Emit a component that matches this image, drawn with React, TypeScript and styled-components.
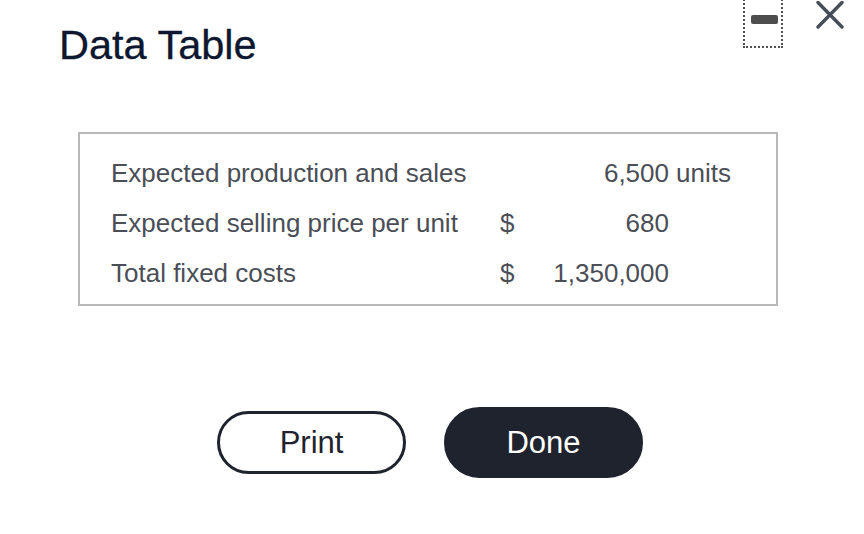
import * as React from "react";
import styled, { createGlobalStyle } from "styled-components";

const GlobalStyle = createGlobalStyle`
    html, body {
        margin: 0;
        padding: 0;
        background: #ffffff;
    }
    body {
        font-family: "Liberation Sans", Arial, sans-serif;
    }
`;

const Dialog = styled.div`
    width: 864px;
    height: 534px;
    overflow: hidden;
    background: #ffffff;
    display: flex;
    flex-direction: column;
`;

const Header = styled.div`
    display: flex;
    justify-content: space-between;
    align-items: flex-start;
    padding: 0 20px 0 59px;
`;

const Title = styled.h1`
    margin: 25px 0 0 0;
    font-size: 41.5px;
    line-height: 40px;
    font-weight: 400;
    color: #0d1730;
    -webkit-text-stroke: 0.3px #0d1730;
`;

const Controls = styled.div`
    display: flex;
    align-items: flex-start;
    gap: 33px;
`;

const MinimizeButton = styled.div`
    box-sizing: border-box;
    width: 40px;
    height: 52px;
    margin-top: -4px;
    padding: 17px 0 0 6px;
    border: 2px dotted #505050;
    cursor: pointer;
`;

const MinimizeBar = styled.div`
    width: 27px;
    height: 9px;
    border-radius: 2px;
    background: #4d4d4d;
`;

const CloseButton = styled.div`
    margin-top: 1px;
    width: 28px;
    height: 28px;
    cursor: pointer;
    display: flex;
`;

const TableBox = styled.div`
    box-sizing: border-box;
    margin: 67px 0 0 78px;
    width: 700px;
    height: 174px;
    border: 2px solid #b8b8b8;
    padding: 14px 0 0 31px;
`;

const Grid = styled.div`
    display: grid;
    grid-template-columns: 389px 24px 145px auto;
    grid-auto-rows: 50px;
    align-items: center;
    font-size: 26px;
    color: #4a4e57;
`;

const Cell = styled.div<{ $align?: "left" | "right" }>`
    text-align: ${(p) => p.$align ?? "left"};
    white-space: nowrap;
    line-height: 50px;
`;

const UnitCell = styled(Cell)`
    padding-left: 7px;
`;

const ButtonRow = styled.div`
    display: flex;
    align-items: center;
    gap: 38px;
    margin: 101px 0 0 217px;
`;

const PillButton = styled.button<{ $primary?: boolean }>`
    box-sizing: border-box;
    font-family: "Liberation Sans", Arial, sans-serif;
    font-size: 31px;
    border-radius: 40px;
    cursor: pointer;
    width: ${(p) => (p.$primary ? "199px" : "189px")};
    height: ${(p) => (p.$primary ? "71px" : "63px")};
    border: 3px solid #1f232e;
    background: ${(p) => (p.$primary ? "#1f232e" : "#ffffff")};
    color: ${(p) => (p.$primary ? "#ffffff" : "#1f232e")};
    display: flex;
    align-items: center;
    justify-content: center;
    padding: 0;
`;

const rows = [
    { label: "Expected production and sales", sign: "", value: "6,500", unit: "units" },
    { label: "Expected selling price per unit", sign: "$", value: "680", unit: "" },
    { label: "Total fixed costs", sign: "$", value: "1,350,000", unit: "" },
];

export default function App() {
    return (
        <>
            <GlobalStyle />
            <Dialog>
                <Header>
                    <Title>Data Table</Title>
                    <Controls>
                        <MinimizeButton role="button" aria-label="Minimize">
                            <MinimizeBar />
                        </MinimizeButton>
                        <CloseButton role="button" aria-label="Close">
                            <svg width="28" height="28" viewBox="0 0 28 28">
                                <path d="M2 1.5 L26 26 M26 1.5 L2 26" stroke="#454d59" strokeWidth="3.4" strokeLinecap="round" fill="none" />
                            </svg>
                        </CloseButton>
                    </Controls>
                </Header>
                <TableBox>
                    <Grid>
                        {rows.map((r) => (
                            <React.Fragment key={r.label}>
                                <Cell>{r.label}</Cell>
                                <Cell>{r.sign}</Cell>
                                <Cell $align="right">{r.value}</Cell>
                                <UnitCell>{r.unit}</UnitCell>
                            </React.Fragment>
                        ))}
                    </Grid>
                </TableBox>
                <ButtonRow>
                    <PillButton>Print</PillButton>
                    <PillButton $primary>Done</PillButton>
                </ButtonRow>
            </Dialog>
        </>
    );
}
